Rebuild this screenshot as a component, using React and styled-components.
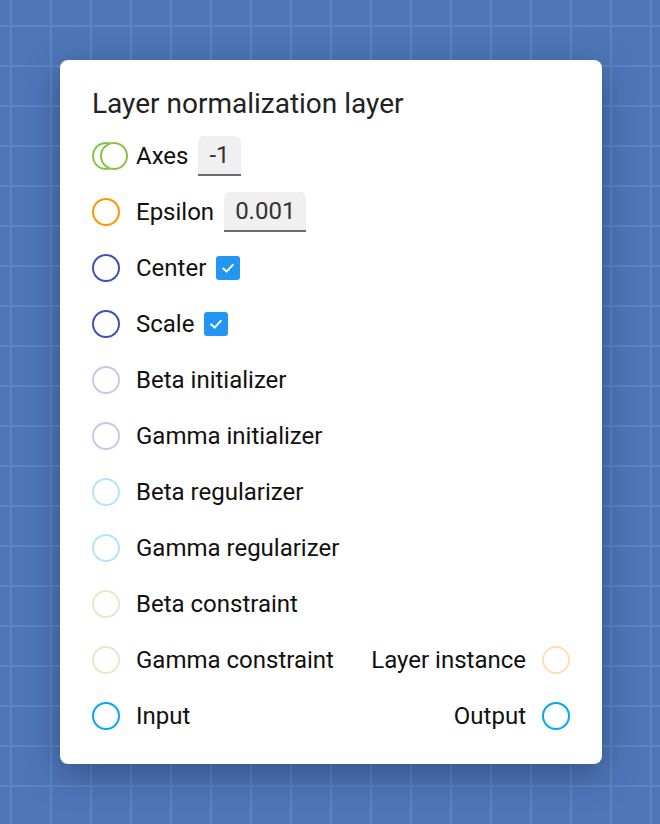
import React from 'react';
import styled, { createGlobalStyle } from 'styled-components';

const GlobalStyle = createGlobalStyle`
    html, body {
        margin: 0;
        padding: 0;
    }
    body {
        font-family: Roboto, "Liberation Sans", sans-serif;
    }
`;

const Canvas = styled.div`
    min-height: 100vh;
    box-sizing: border-box;
    padding: 60px 58px 60px 60px;
    background-color: #4f77b8;
    background-image:
        linear-gradient(to right, #5a86c4 2px, transparent 2px),
        linear-gradient(to bottom, #5a86c4 2px, transparent 2px);
    background-size: 40px 40px;
    background-position: 10px 25px;
`;

const Node = styled.div`
    width: 542px;
    box-sizing: border-box;
    background: #fff;
    border-radius: 8px;
    padding: 28px 32px;
    box-shadow: 0 10px 36px rgba(20, 35, 70, 0.45);
    display: flex;
    flex-direction: column;
    gap: 16px;
`;

const Title = styled.h1`
    margin: 0;
    font-size: 28px;
    font-weight: 400;
    line-height: 32px;
    color: #222;
`;

const Row = styled.div`
    height: 40px;
    display: flex;
    align-items: center;
    justify-content: space-between;
`;

const Side = styled.div`
    display: flex;
    align-items: center;
    gap: 16px;
`;

const Field = styled.div`
    display: flex;
    align-items: center;
    gap: 10px;
`;

const Label = styled.span`
    font-size: 24px;
    color: #111;
    line-height: 28px;
`;

const Port = styled.span`
    position: relative;
    flex: none;
    width: 28px;
    height: 28px;
    box-sizing: border-box;
    border: 2px solid ${(p) => p.$color};
    border-radius: 50%;
    background: #fff;
`;

const StackedPort = styled(Port)`
    &::after {
        content: '';
        position: absolute;
        top: -2px;
        left: 6px;
        width: 28px;
        height: 28px;
        box-sizing: border-box;
        border: 2px solid ${(p) => p.$color};
        border-radius: 50%;
        background: #fff;
    }
`;

const PortSlot = styled.span`
    display: flex;
    width: 28px;
`;

const ValueBox = styled.span`
    height: 40px;
    box-sizing: border-box;
    padding: 0 11px;
    display: flex;
    align-items: center;
    font-size: 24px;
    color: #333;
    background: #f0f0f0;
    border-radius: 6px 6px 0 0;
    border-bottom: 2px solid #6b6b6b;
`;

const Check = styled.span`
    width: 24px;
    height: 24px;
    border-radius: 3px;
    background: #2196f3;
    display: flex;
    align-items: center;
    justify-content: center;
`;

const CheckMark = () => (
    <Check>
        <svg width="16" height="16" viewBox="0 0 16 16">
            <path d="M3.2 8.4 L6.6 11.6 L12.8 4.8" fill="none" stroke="#fff" strokeWidth="2" strokeLinecap="round" strokeLinejoin="round" />
        </svg>
    </Check>
);

const colors = {
    green: '#8bc34a',
    orange: '#ff9800',
    indigo: '#3f51b5',
    paleIndigo: '#c5cae9',
    paleBlue: '#b3e5fc',
    paleGreen: '#dcedc8',
    paleOrange: '#ffe0b2',
    blue: '#03a9f4',
};

const params = [
    { label: 'Axes', color: colors.green, value: '-1', multi: true },
    { label: 'Epsilon', color: colors.orange, value: '0.001' },
    { label: 'Center', color: colors.indigo, checked: true },
    { label: 'Scale', color: colors.indigo, checked: true },
    { label: 'Beta initializer', color: colors.paleIndigo },
    { label: 'Gamma initializer', color: colors.paleIndigo },
    { label: 'Beta regularizer', color: colors.paleBlue },
    { label: 'Gamma regularizer', color: colors.paleBlue },
    { label: 'Beta constraint', color: colors.paleGreen },
];

function App() {
    return (
        <Canvas>
            <GlobalStyle />
            <Node>
                <Title>Layer normalization layer</Title>
                {params.map((p) => (
                    <Row key={p.label}>
                        <Side>
                            <PortSlot>
                                {p.multi ? <StackedPort $color={p.color} /> : <Port $color={p.color} />}
                            </PortSlot>
                            <Field>
                                <Label>{p.label}</Label>
                                {p.value && <ValueBox>{p.value}</ValueBox>}
                                {p.checked && <CheckMark />}
                            </Field>
                        </Side>
                    </Row>
                ))}
                <Row>
                    <Side>
                        <Port $color={colors.paleGreen} />
                        <Label>Gamma constraint</Label>
                    </Side>
                    <Side>
                        <Label>Layer instance</Label>
                        <Port $color={colors.paleOrange} />
                    </Side>
                </Row>
                <Row>
                    <Side>
                        <Port $color={colors.blue} />
                        <Label>Input</Label>
                    </Side>
                    <Side>
                        <Label>Output</Label>
                        <Port $color={colors.blue} />
                    </Side>
                </Row>
            </Node>
        </Canvas>
    );
}

export default App;
